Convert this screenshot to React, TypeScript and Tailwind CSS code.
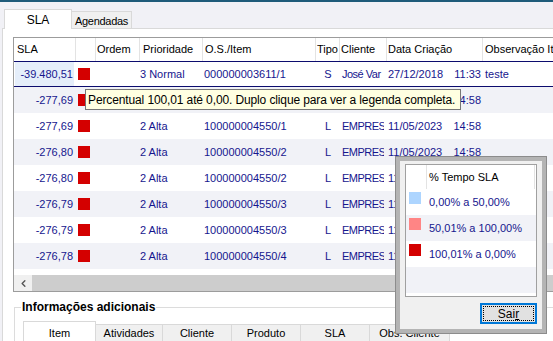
import { ChevronLeft } from 'lucide-react';

type Row = {
  sla: string;
  pri: string;
  os: string;
  tipo: string;
  cli: string;
  data: string;
  hora: string;
  obs: string;
};

const ROWS: Row[] = [
  { sla: '-39.480,51', pri: '3 Normal', os: '000000003611/1', tipo: 'S', cli: 'José Var', data: '27/12/2018', hora: '11:33', obs: 'teste' },
  { sla: '-277,69', pri: '2 Alta', os: '100000004550/1', tipo: 'L', cli: 'EMPRESA', data: '11/05/2023', hora: '14:58', obs: '' },
  { sla: '-277,69', pri: '2 Alta', os: '100000004550/1', tipo: 'L', cli: 'EMPRESA', data: '11/05/2023', hora: '14:58', obs: '' },
  { sla: '-276,80', pri: '2 Alta', os: '100000004550/2', tipo: 'L', cli: 'EMPRESA', data: '11/05/2023', hora: '14:58', obs: '' },
  { sla: '-276,80', pri: '2 Alta', os: '100000004550/2', tipo: 'L', cli: 'EMPRESA', data: '11/05/2023', hora: '14:58', obs: '' },
  { sla: '-276,79', pri: '2 Alta', os: '100000004550/3', tipo: 'L', cli: 'EMPRESA', data: '11/05/2023', hora: '14:58', obs: '' },
  { sla: '-276,79', pri: '2 Alta', os: '100000004550/3', tipo: 'L', cli: 'EMPRESA', data: '11/05/2023', hora: '14:58', obs: '' },
  { sla: '-276,78', pri: '2 Alta', os: '100000004550/4', tipo: 'L', cli: 'EMPRESA', data: '11/05/2023', hora: '14:58', obs: '' },
];

const HEAD = [
  { label: 'SLA', cls: 'w-[62px] pl-[3px]' },
  { label: '', cls: 'w-[20px]' },
  { label: 'Ordem', cls: 'w-[44px] pl-[1px]' },
  { label: 'Prioridade', cls: 'w-[63px] pl-[3px]' },
  { label: 'O.S./Item', cls: 'w-[113px] pl-[2px]' },
  { label: 'Tipo', cls: 'w-[24px] pl-[1px]' },
  { label: 'Cliente', cls: 'w-[47px] pl-[1px]' },
  { label: 'Data Criação', cls: 'w-[96px] pl-[1px]' },
  { label: 'Observação Item', cls: 'w-[200px] pl-[2px]' },
];

const LEGEND = [
  { color: 'bg-[#add5ff]', label: '0,00% a 50,00%', bg: 'bg-white' },
  { color: 'bg-[#ff8585]', label: '50,01% a 100,00%', bg: 'bg-[#f1f2f7]' },
  { color: 'bg-[#d40000]', label: '100,01% a 0,00%', bg: 'bg-white' },
];

const BOTTOM_TABS = [
  { label: 'Atividades', cls: 'w-[67px]' },
  { label: 'Cliente', cls: 'w-[69px]' },
  { label: 'Produto', cls: 'w-[69px]' },
  { label: 'SLA', cls: 'w-[69px]' },
  { label: 'Obs. Cliente', cls: 'w-[80px]' },
];

export default function App() {
  return (
    <div className="relative flex h-[341px] w-[553px] flex-col overflow-hidden bg-[#f1f1f6] font-['Liberation_Sans',Arial,sans-serif] text-[11px] text-black">
      <div className="h-[2px] shrink-0 bg-[#1f5b7a]" />

      {/* Top tabs */}
      <div className="mt-[7px] flex h-[19px] shrink-0 items-end pl-[4px]">
        <div className="relative z-10 -mb-px flex h-[20px] w-[68px] justify-center border-x border-t border-[#d9d9d9] bg-white pt-[3px] text-[12px] leading-[14px]">
          SLA
        </div>
        <div className="flex h-[17px] w-[60px] justify-center border-r border-t border-[#d9d9d9] bg-[#f0f0f0] pt-[2px] leading-[14px] tracking-[-0.3px]">
          Agendadas
        </div>
      </div>

      {/* Tab panel */}
      <div className="ml-[2px] flex flex-1 flex-col border-l border-t border-[#d9d9d9] bg-white pl-[10px] pt-[8px]">
        {/* Grid */}
        <div className="w-[640px] shrink-0 border-y border-l border-[#9c9c9c] bg-white">
          <div className="flex h-[23px] items-stretch bg-white">
            {HEAD.map((h, i) => (
              <div
                key={i}
                className={`flex shrink-0 items-center overflow-hidden whitespace-nowrap border-r border-[#e3e3e3] ${h.cls}`}
              >
                {h.label}
              </div>
            ))}
          </div>

          {ROWS.map((r, i) => {
            const sel = i === 0;
            const bg = sel ? 'bg-white border-y border-[#0c0c6e]' : i % 2 === 1 ? 'bg-[#f1f2f7]' : 'bg-white';
            return (
              <div key={i} className={`flex h-[26px] items-center text-[#16168e] ${bg}`}>
                <div className="flex h-full w-[62px] shrink-0 items-center">
                  <div
                    className={`ml-[1px] flex h-full w-[59px] items-center justify-end pr-[1px] ${sel ? 'bg-[#e5eefa]' : ''}`}
                  >
                    {r.sla}
                  </div>
                </div>
                <div className="w-[20px] shrink-0 pl-[2px]">
                  <div className="h-[12px] w-[12px] bg-[#d40000]" />
                </div>
                <div className="w-[44px] shrink-0" />
                <div className="w-[63px] shrink-0 whitespace-nowrap">{r.pri}</div>
                <div className="w-[113px] shrink-0 whitespace-nowrap pl-[1px]">{r.os}</div>
                <div className="w-[24px] shrink-0 text-center">{r.tipo}</div>
                <div className="mr-[3px] w-[44px] shrink-0 overflow-hidden whitespace-nowrap pl-[2px] tracking-[-0.5px]">{r.cli}</div>
                <div className="flex w-[96px] shrink-0 justify-between whitespace-nowrap pl-[1px] pr-[2px]">
                  <span>{r.data}</span>
                  <span>{r.hora}</span>
                </div>
                <div className="w-[200px] shrink-0 pl-[2px]">{r.obs}</div>
              </div>
            );
          })}

          {/* Horizontal scrollbar */}
          <div className="mt-[6px] flex h-[16px]">
            <div className="flex w-[18px] items-center justify-center bg-[#f0f0f0] text-[#555]">
              <ChevronLeft className="h-[11px] w-[11px]" strokeWidth={3} />
            </div>
            <div className="flex-1 bg-[#cdcdcd]" />
          </div>
        </div>

        {/* Informações adicionais */}
        <fieldset className="ml-[1px] mt-[8px] w-[600px] shrink-0 border border-[#dcdcdc] pl-[6px]">
          <legend className="px-[1px] text-[12px] font-bold leading-[14px]">Informações adicionais</legend>
          <div className="ml-[2px] flex items-start pt-[7px]">
            <div className="flex h-[22px] w-[73px] shrink-0 justify-center border-x border-t border-[#d9d9d9] bg-white pt-[4px] leading-[14px]">
              Item
            </div>
            {BOTTOM_TABS.map((t) => (
              <div
                key={t.label}
                className={`mt-[3px] flex h-[19px] shrink-0 justify-center border-r border-t border-[#d9d9d9] bg-[#f0f0f0] pt-[1px] leading-[14px] ${t.cls}`}
              >
                {t.label}
              </div>
            ))}
          </div>
        </fieldset>
      </div>

      {/* Tooltip */}
      <div className="absolute left-[85px] top-[89px] flex h-[21px] w-[376px] items-center whitespace-nowrap border border-[#767676] bg-[#ffffe1] pl-[2px] text-[12px] tracking-[-0.12px]">
        Percentual 100,01 até 0,00. Duplo clique para ver a legenda completa.
      </div>

      {/* Legend window */}
      <div className="absolute left-[395px] top-[156px] h-[178px] w-[152px] border border-[#8c8c8c] bg-[#b4b4b4] p-[4px]">
        <div className="flex h-full flex-col bg-[#f0f0f0] px-[5px] pt-[3px]">
          <div className="flex h-[133px] flex-col overflow-hidden border border-[#a0a0a0] bg-white">
            <div className="flex h-[24px] shrink-0 bg-white">
              <div className="w-[21px] shrink-0 border-r border-[#e3e3e3]" />
              <div className="flex w-[108px] shrink-0 items-center border-r border-[#e3e3e3] pl-[2px]">% Tempo SLA</div>
            </div>
            {LEGEND.map((l) => (
              <div key={l.label} className={`flex h-[26px] shrink-0 ${l.bg}`}>
                <div className="w-[21px] shrink-0 pl-[3px] pt-[3px]">
                  <div className={`h-[12px] w-[12px] ${l.color}`} />
                </div>
                <div className="flex items-center whitespace-nowrap pl-[2px] text-[#16168e]">{l.label}</div>
              </div>
            ))}
            <div className="h-[26px] shrink-0 bg-[#f1f2f7]" />
          </div>
          <div className="mt-[6px] flex justify-end">
            <button className="h-[21px] w-[57px] border-2 border-[#0078d7] bg-[#e1e1e1] p-[1px] text-[12px] text-black">
              <div className="flex h-full items-center justify-center border border-dotted border-black leading-[14px]">
                Sai<span className="underline">r</span>
              </div>
            </button>
          </div>
        </div>
      </div>
    </div>
  );
}
